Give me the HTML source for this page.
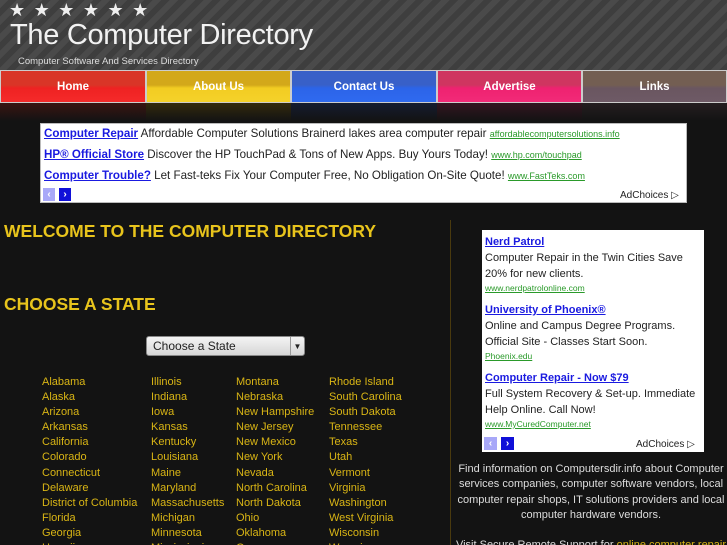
<!DOCTYPE html>
<html><head><meta charset="utf-8"><style>
*{margin:0;padding:0;box-sizing:border-box}
html,body{width:727px;height:545px;overflow:hidden}
body{background:#131313;font-family:"Liberation Sans",sans-serif;position:relative}
.hdr{position:absolute;left:0;top:0;width:727px;height:70px;background:repeating-linear-gradient(135deg,#4a4a4a 0 6px,#3e3e3e 6px 12px)}
.stars{position:absolute;left:9px;top:0px;color:#eee;font-size:18px;letter-spacing:8.5px;line-height:20px}
.title{position:absolute;left:10px;top:19px;color:#f2f2f2;font-size:29px;font-weight:normal;letter-spacing:-0.3px}
.sub{position:absolute;left:18px;top:56px;color:#ddd;font-size:9.5px}
.nav{position:absolute;top:70px;height:33px;border:1px solid #ccc;color:#fff;font-weight:bold;font-size:11.5px;text-align:center;line-height:32px}
.refl{position:absolute;top:103px;height:18px}
.ad{position:absolute;left:40px;top:123px;width:647px;height:80px;background:#fff;border:1px solid #bbb;font-size:11.6px;color:#222}
.ad p{position:absolute;left:3px;white-space:nowrap}
a.b{color:#1a1ae0;font-weight:bold;text-decoration:underline}
a.g{color:#2a9a2a;font-size:9px;text-decoration:underline}
.arr{position:absolute;width:12px;height:13px;color:#fff;font-size:10px;text-align:center;line-height:13px;font-weight:bold}
.h{position:absolute;left:4px;color:#e8c41c;font-weight:bold;font-size:17.5px}
.sel{position:absolute;left:146px;top:336px;width:159px;height:20px;border:1px solid #888;border-radius:3px;background:linear-gradient(#f4f4f4,#d6d6d6);font-size:12px;color:#222;line-height:19px;padding-left:6px}
.sel span{position:absolute;right:0;top:0;width:14px;height:18px;border-left:1px solid #999;font-size:8px;text-align:center}
.col{position:absolute;top:375px;color:#d9b515;font-size:11px;line-height:15.1px}
.vl{position:absolute;left:450px;top:220px;width:1px;height:325px;background:#4a3a0e}
.rad{position:absolute;left:482px;top:230px;width:222px;height:222px;background:#fff;font-size:11px;color:#222;line-height:16px}
.rad div{position:absolute;left:3px;width:215px}
.info{position:absolute;left:455px;top:462px;width:272px;text-align:center;color:#ddd;font-size:11px;line-height:15.3px}
</style></head><body>
<div class="hdr">
<div class="stars">★★★★★★</div>
<div class="title">The Computer Directory</div>
<div class="sub">Computer Software And Services Directory</div>
</div>
<div class="nav" style="left:0;width:146px;background:linear-gradient(#d93527 0,#d93527 45%,#ee2222 55%,#f52a2a)">Home</div>
<div class="nav" style="left:146px;width:145px;background:linear-gradient(#d3a81a 0,#d3a81a 45%,#f2cc22 55%,#f5d22a)">About Us</div>
<div class="nav" style="left:291px;width:146px;background:linear-gradient(#3860c8 0,#3860c8 45%,#2c64e8 55%,#2f6af0)">Contact Us</div>
<div class="nav" style="left:437px;width:145px;background:linear-gradient(#cf3560 0,#cf3560 45%,#ee2270 55%,#f22a78)">Advertise</div>
<div class="nav" style="left:582px;width:145px;background:linear-gradient(#735e52 0,#735e52 45%,#6a5660 55%,#6e5a66)">Links</div>
<div class="refl" style="left:0;width:146px;background:linear-gradient(#3a1412,#131313)"></div>
<div class="refl" style="left:146px;width:145px;background:linear-gradient(#332a0c,#131313)"></div>
<div class="refl" style="left:291px;width:146px;background:linear-gradient(#141c30,#131313)"></div>
<div class="refl" style="left:437px;width:145px;background:linear-gradient(#331420,#131313)"></div>
<div class="refl" style="left:582px;width:145px;background:linear-gradient(#241e20,#131313)"></div>
<div class="ad">
<p style="top:3px"><a class="b">Computer Repair</a> Affordable Computer Solutions Brainerd lakes area computer repair <a class="g">affordablecomputersolutions.info</a></p>
<p style="top:24px"><a class="b">HP® Official Store</a> Discover the HP TouchPad &amp; Tons of New Apps. Buy Yours Today! <a class="g">www.hp.com/touchpad</a></p>
<p style="top:45px"><a class="b">Computer Trouble?</a> Let Fast-teks Fix Your Computer Free, No Obligation On-Site Quote! <a class="g">www.FastTeks.com</a></p>
<div class="arr" style="left:2px;top:64px;background:#a8a8f8">‹</div>
<div class="arr" style="left:18px;top:64px;background:#1010d8">›</div>
<p style="top:66px;left:579px;font-size:10px">AdChoices ▷</p>
</div>
<div class="h" style="top:221px">WELCOME TO THE COMPUTER DIRECTORY</div>
<div class="h" style="top:294px">CHOOSE A STATE</div>
<div class="sel">Choose a State<span>▼</span></div>
<div class="col" style="left:42px">Alabama<br>Alaska<br>Arizona<br>Arkansas<br>California<br>Colorado<br>Connecticut<br>Delaware<br>District of Columbia<br>Florida<br>Georgia<br>Hawaii</div>
<div class="col" style="left:151px">Illinois<br>Indiana<br>Iowa<br>Kansas<br>Kentucky<br>Louisiana<br>Maine<br>Maryland<br>Massachusetts<br>Michigan<br>Minnesota<br>Mississippi</div>
<div class="col" style="left:236px">Montana<br>Nebraska<br>New Hampshire<br>New Jersey<br>New Mexico<br>New York<br>Nevada<br>North Carolina<br>North Dakota<br>Ohio<br>Oklahoma<br>Oregon</div>
<div class="col" style="left:329px">Rhode Island<br>South Carolina<br>South Dakota<br>Tennessee<br>Texas<br>Utah<br>Vermont<br>Virginia<br>Washington<br>West Virginia<br>Wisconsin<br>Wyoming</div>
<div class="vl"></div>
<div class="rad">
<div style="top:4px"><a class="b">Nerd Patrol</a></div>
<div style="top:20px">Computer Repair in the Twin Cities Save 20% for new clients.</div>
<div style="top:50px"><a class="g" style="font-size:8.5px">www.nerdpatrolonline.com</a></div>
<div style="top:72px"><a class="b">University of Phoenix®</a></div>
<div style="top:88px">Online and Campus Degree Programs. Official Site - Classes Start Soon.</div>
<div style="top:118px"><a class="g" style="font-size:8.5px">Phoenix.edu</a></div>
<div style="top:140px"><a class="b">Computer Repair - Now $79</a></div>
<div style="top:156px">Full System Recovery &amp; Set-up. Immediate Help Online. Call Now!</div>
<div style="top:186px"><a class="g" style="font-size:8.5px">www.MyCuredComputer.net</a></div>
<div class="arr" style="left:2px;top:207px;width:13px;background:#a8a8f8">‹</div>
<div class="arr" style="left:19px;top:207px;width:13px;background:#1010d8">›</div>
<div style="top:207px;left:154px;width:70px;font-size:10px">AdChoices ▷</div>
</div>
<div class="info">Find information on Computersdir.info about Computer services companies, computer software vendors, local computer repair shops, IT solutions providers and local computer hardware vendors.<br><br>Visit Secure Remote Support for <span style="color:#d9b515">online computer repair</span></div>
</body></html>
